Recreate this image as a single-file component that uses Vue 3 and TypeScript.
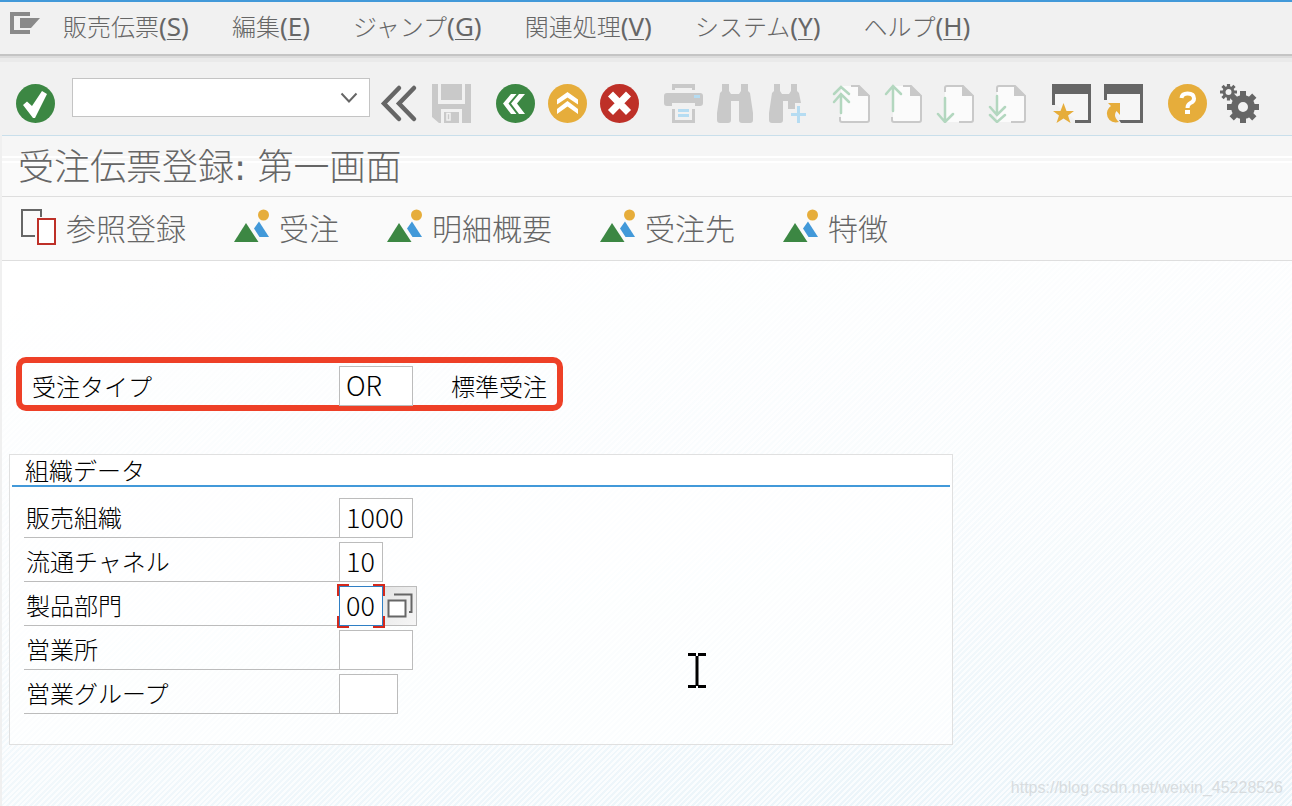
<script setup lang="ts">
import { ref } from 'vue'

interface MenuEntry { label: string; key: string }
interface Tool { id: string; name: string; off?: boolean }
interface Field { id: string; label: string; value: string; size: string; focus?: boolean }

const menus: MenuEntry[] = [
  { label: '販売伝票', key: 'S' },
  { label: '編集', key: 'E' },
  { label: 'ジャンプ', key: 'G' },
  { label: '関連処理', key: 'V' },
  { label: 'システム', key: 'Y' },
  { label: 'ヘルプ', key: 'H' },
]

const groups: Tool[][] = [
  [
    { id: 'back', name: '戻る' },
    { id: 'exit', name: '終了' },
    { id: 'cancel', name: '取消' },
  ],
  [
    { id: 'print', name: '印刷', off: true },
    { id: 'find', name: '検索', off: true },
    { id: 'findnext', name: '次を検索', off: true },
  ],
  [
    { id: 'first', name: '先頭ページ', off: true },
    { id: 'prev', name: '前ページ', off: true },
    { id: 'next', name: '次ページ', off: true },
    { id: 'last', name: '最終ページ', off: true },
  ],
  [
    { id: 'session', name: '新規セッション' },
    { id: 'shortcut', name: 'ショートカット登録' },
  ],
  [
    { id: 'help', name: 'ヘルプ' },
    { id: 'settings', name: 'レイアウト調整' },
  ],
]

const actions = ['受注', '明細概要', '受注先', '特徴']

const command = ref('')
const orderType = ref('OR')
const fields = ref<Field[]>([
  { id: 'org', label: '販売組織', value: '1000', size: 'w4' },
  { id: 'channel', label: '流通チャネル', value: '10', size: 'w2' },
  { id: 'division', label: '製品部門', value: '00', size: 'w2', focus: true },
  { id: 'office', label: '営業所', value: '', size: 'w4' },
  { id: 'group', label: '営業グループ', value: '', size: 'w3' },
])

function teeth(cx: number, cy: number, count: number, r: number, w: number, len: number): string {
  let d = ''
  for (let i = 0; i < count; i++) {
    const a = (i * 2 * Math.PI) / count
    const c = Math.cos(a)
    const s = Math.sin(a)
    const pts = [[r, -w], [r + len, -w], [r + len, w], [r, w]].map(
      ([x, y]) => `${(cx + x * c - y * s).toFixed(2)} ${(cy + x * s + y * c).toFixed(2)}`,
    )
    d += `M${pts.join('L')}Z`
  }
  return d
}
const bigGear = teeth(23, 23, 8, 10, 3, 6)
const smallGear = teeth(8.5, 8, 8, 4, 1.6, 4.5)
</script>

<template>
  <div class="window">
    <nav class="menubar" aria-label="メニュー">
      <button class="sysmenu" aria-label="システムメニュー">
        <svg width="30" height="24" viewBox="0 0 30 24"><path d="M20 2H2V20H20" fill="none" stroke="#8a8a8a" stroke-width="4" /><path d="M10 6H30L21 16H10Z" fill="#8a8a8a" /></svg>
      </button>
      <button v-for="m in menus" :key="m.key" class="menu">{{ m.label }}<span class="latin">(<u>{{ m.key }}</u>)</span></button>
    </nav>

    <div class="toolbar">
      <button class="tool ok" aria-label="確定">
        <svg viewBox="0 0 39 39"><circle cx="19.5" cy="19.5" r="19.5" fill="#3c8743" /><path d="M7 21L11 17.500L16 22L26 7L31 10L19 34H17Z" fill="#fff" /></svg>
      </button>
      <div class="command">
        <input v-model="command" aria-label="コマンド" />
        <button aria-label="履歴"><svg width="18" height="12" viewBox="0 0 18 12"><path d="M1.500 1.500L9 9.500L16.500 1.500" fill="none" stroke="#666" stroke-width="2" /></svg></button>
      </div>
      <button class="tool collapse" aria-label="閉じる">
        <svg viewBox="0 0 39 39"><path d="M19 4L4 19.500L19 35M34 4L19 19.500L34 35" fill="none" stroke="#666" stroke-width="4.500" stroke-linecap="round" /></svg>
      </button>
      <button class="tool save" aria-label="保存" disabled>
        <svg viewBox="0 0 39 39"><path d="M0 0H6V20H33V0H39V39H30V25H9V39H7L0 33Z" fill="#c9c9c9" /><path d="M9 0H30V16H9ZM12 28H27V39H12Z" fill="#c9c9c9" /><path d="M15 29.500H18V36H15Z" fill="none" stroke="#f2f2f2" stroke-width="1.500" /></svg>
      </button>

      <div v-for="(g, gi) in groups" :key="gi" class="group">
        <button v-for="t in g" :key="t.id" class="tool" :aria-label="t.name" :disabled="t.off">
          <svg viewBox="0 0 39 39">
            <template v-if="t.id === 'back'">
              <circle cx="19.500" cy="19.500" r="19.500" fill="#3c8743" />
              <path d="M7 19.500L15 10H20.500L12.500 19.500L20.500 30H15ZM15 19.500L23 10H29L21 19.500L29 30H23Z" fill="#fff" />
            </template>
            <template v-else-if="t.id === 'exit'">
              <circle cx="19.500" cy="19.500" r="19.500" fill="#e6ad3b" />
              <path d="M9 15.500L19.500 8L30 15.500V20.500L19.500 13.500L9 20.500ZM9 25L19.500 17L30 25V30L19.500 22.500L9 30Z" fill="#fff" />
            </template>
            <template v-else-if="t.id === 'cancel'">
              <circle cx="19.500" cy="19.500" r="19.500" fill="#be3028" />
              <path d="M10.500 10L28.500 28.500M28.500 10L10.500 28.500" stroke="#fff" stroke-width="7" />
            </template>
            <template v-else-if="t.id === 'print'">
              <path d="M8 6V0H31V6H28V4H11V6ZM0 12Q0 9 3 9H36Q39 9 39 12V19Q39 22 36 22H31V19H8V22H3Q0 22 0 19ZM8 25H11V36H28V25H31V39H8Z" fill="#c9c9c9" />
              <path d="M30 11H36V14H30ZM14 25H25V28H14ZM14 30H25V33H14Z" fill="#b5dcf2" />
            </template>
            <template v-else-if="t.id === 'find'">
              <path d="M6 0H13V7L15 10H23L25 7V0H32V7L34 9L37 29V36Q37 39 34 39H26Q23 39 23 36V17H15V36Q15 39 12 39H4Q1 39 1 36V29L4 9L6 7Z" fill="#c9c9c9" />
            </template>
            <template v-else-if="t.id === 'findnext'">
              <path d="M6 0H12V7L14 10H21L23 7V0H29V7L31 9L33 19H27V25H20V17H15V36Q15 39 12 39H4Q1 39 1 36V29L4 9L6 7Z" fill="#c9c9c9" />
              <path d="M29 22H32V29H38V32H32V39H29V32H23V29H29Z" fill="#b5dcf2" />
            </template>
            <template v-else-if="['first', 'prev', 'next', 'last'].includes(t.id)">
              <path d="M9 2H28L37 11V38H9Z" fill="#fbfbfb" />
              <path v-if="t.id === 'first' || t.id === 'prev'" d="M19 2H27L37 12V36Q37 38 35 38H10Q8 38 8 36V33" fill="none" stroke="#c9c9c9" stroke-width="2" />
              <path v-else d="M9 8V4Q9 2 11 2H27L37 12V36Q37 38 35 38H23" fill="none" stroke="#c9c9c9" stroke-width="2" />
              <path d="M26 1L38 12H26Z" fill="#c9c9c9" />
              <path v-if="t.id === 'first'" d="M9 29V10M2 18L9 10L17 18M2 10L9 3L17 10" class="arrow" />
              <path v-if="t.id === 'prev'" d="M9 27V3M2 10L9 2L17 10" class="arrow" />
              <path v-if="t.id === 'next'" d="M9 14V37M2 30L9 38L17 30" class="arrow" />
              <path v-if="t.id === 'last'" d="M9 12V30M2 23L9 31L17 23M2 31L9 38L17 31" class="arrow" />
            </template>
            <template v-else-if="t.id === 'session'">
              <path d="M3 10H36V36H23L3 20Z" fill="#f6f6f6" />
              <path d="M0 0H39V39H23V36H36V10H3V21H0Z" fill="#666" />
              <path d="M11.500 19L14.500 27H22L16 31.500L18.500 39L11.500 34.500L4.500 39L7 31.500L1 27H8.500Z" fill="#e6ad3b" />
            </template>
            <template v-else-if="t.id === 'shortcut'">
              <path d="M3 10H36V36H17L3 16Z" fill="#f6f6f6" />
              <path d="M0 0H39V39H17L15 36H36V10H3V16H0Z" fill="#666" />
              <path d="M4 19H16V31L12.500 27Q8.500 32 15 38Q9 39.500 5.500 36Q2.500 32.500 3 28.500Q3.500 24.500 7 22Z" fill="#e6ad3b" />
            </template>
            <template v-else-if="t.id === 'help'">
              <circle cx="19.500" cy="19.500" r="19.500" fill="#e6ad3b" />
              <path d="M13.500 14Q14 9.500 19.500 9.500Q26 9.500 26 14.500Q26 17.500 22.500 19Q19.500 20.500 19.500 24" fill="none" stroke="#fff" stroke-width="4" /><path d="M17 26H22V30H17Z" fill="#fff" />
            </template>
            <template v-else>
              <circle cx="23" cy="23" r="8.500" fill="none" stroke="#666" stroke-width="7" />
              <path :d="bigGear" fill="#666" />
              <circle cx="8.500" cy="8" r="4.500" fill="none" stroke="#666" stroke-width="3" />
              <path :d="smallGear" fill="#666" />
            </template>
          </svg>
        </button>
      </div>
    </div>

    <div class="body">
      <header class="titlebar"><h1>受注伝票登録<span class="colon">: </span>第一画面</h1></header>

      <div class="actions">
        <button class="action">
          <svg width="36" height="36" viewBox="0 0 36 36"><path d="M14 27H1V1H20V8" fill="none" stroke="#666" stroke-width="2" /><path d="M17 10H34V35H17Z" fill="#fff" stroke="#be3028" stroke-width="2" /></svg>
          参照登録
        </button>
        <button v-for="a in actions" :key="a" class="action">
          <svg width="36" height="36" viewBox="0 0 36 36"><circle cx="29.500" cy="6" r="5.500" fill="#e6ad3b" /><path d="M25 12.500L35 28H25.500L20 19.500Z" fill="#4299d9" /><path d="M12 14L24.500 33H0Z" fill="#3c8743" /></svg>
          {{ a }}
        </button>
      </div>

      <main class="content">
        <section class="order">
          <label for="order-type">受注タイプ</label>
          <input id="order-type" v-model="orderType" class="entry" />
          <span class="desc">標準受注</span>
        </section>

        <section class="panel">
          <h2>組織データ</h2>
          <div class="rows">
            <div v-for="f in fields" :key="f.id" class="row">
              <label :for="f.id">{{ f.label }}</label>
              <div class="cell" :class="{ focus: f.focus }">
                <input :id="f.id" v-model="f.value" class="entry" :class="f.size" />
                <svg v-if="f.focus" class="corners" width="48" height="44" viewBox="0 0 48 44"><path d="M1 12V1H12M36 1H47V12M47 32V43H36M12 43H1V32" fill="none" stroke="#d4291c" stroke-width="2" /></svg>
              </div>
              <button v-if="f.focus" class="pick" aria-label="入力候補">
                <svg width="26" height="26" viewBox="0 0 26 26"><path d="M7 1.500H24.500V19H22" fill="none" stroke="#666" stroke-width="2" /><path d="M1.500 7.500H18.500V23.500H1.500Z" fill="#fff" stroke="#666" stroke-width="2" /></svg>
              </button>
            </div>
          </div>
          <svg class="caret" width="20" height="36" viewBox="0 0 20 36"><path d="M1 1.500H9M11 1.500H19M1 33.500H9M11 33.500H19M10 3V33" fill="none" stroke="#000" stroke-width="3" /></svg>
        </section>
        <p class="mark">https://blog.csdn.net/weixin_45228526</p>
      </main>
    </div>
  </div>
</template>

<style>
body { margin: 0; }
</style>

<style scoped>
* { box-sizing: border-box; }
.window {
  min-height: 100vh;
  display: flex;
  flex-direction: column;
  background: #f0f0f0;
  color: #666;
  font-family: "Noto Sans CJK JP", sans-serif;
  font-weight: 300;
}
button {
  border: 0;
  padding: 0;
  background: none;
  color: inherit;
  font: inherit;
  white-space: nowrap;
}
svg { display: block; flex: none; }
h1, h2, p { margin: 0; font-weight: 300; }
.menubar {
  display: flex;
  align-items: center;
  gap: 43px;
  height: 62px;
  padding: 0 10px 12px;
  border-top: 2px solid #4299d9;
  background: linear-gradient(#f1f1f1 52px, #c4c4c4 52px 54px, #dcdcdc 54px 56px, #eaeaea 56px);
}
.sysmenu { margin: 0 -20px 4px 0; }
.menu { font-size: 24px; line-height: 36px; }
.latin { font-family: "Noto Sans", sans-serif; font-size: 26px; font-weight: 400; }
.latin u { text-decoration-thickness: 1px; text-underline-offset: 3px; }
.toolbar {
  display: flex;
  align-items: center;
  height: 73px;
  padding: 10px 16px 0;
  background: #f1f1f1;
}
.tool { width: 39px; height: 39px; flex: none; }
.tool svg { width: 39px; height: 39px; }
.command {
  position: relative;
  width: 298px;
  height: 39px;
  margin: 0 10px 12px 17px;
}
.command input {
  width: 100%;
  height: 100%;
  border: 1px solid #c4c4c4;
  padding: 0 36px 0 8px;
  background: #fff;
  font: inherit;
  font-size: 24px;
}
.command button { position: absolute; right: 12px; top: 14px; }
.save { margin-left: 13px; }
.group { display: flex; gap: 13px; margin-left: 25px; }
.arrow { fill: none; stroke: #b3d7bf; stroke-width: 2.5; stroke-linecap: round; }
.body {
  flex: 1;
  display: flex;
  flex-direction: column;
  margin-left: 2px;
  border-top: 1px solid #c9dfeb;
}
.titlebar {
  height: 61px;
  padding: 0 16px;
  background: linear-gradient(#f6f6f6 20px, #fff 20px 22px, #f6f6f6 22px 25px, #fff 25px 27px, #fafafa 27px);
  border-bottom: 1px solid #dedede;
}
h1 { font-size: 36px; line-height: 56px; }
.colon { font-family: "DejaVu Sans", sans-serif; font-weight: 400; }
.actions {
  display: flex;
  align-items: center;
  gap: 48px;
  height: 64px;
  padding: 0 19px;
  background: #fafafa;
  border-bottom: 1px solid #dedede;
}
.action { display: flex; align-items: center; gap: 9px; height: 44px; font-size: 30px; line-height: 40px; padding-bottom: 3px; }
.content {
  flex: 1;
  position: relative;
  padding: 96px 7px 61px;
  color: #000;
  font-size: 24px;
  line-height: 36px;
  background:
    linear-gradient(172deg, #fff 5%, #ffffffb0 50%, #ffffff10 100%),
    repeating-linear-gradient(135deg, #e8f3f9 0 2px, #f9fcfe 2px 4px);
}
.order {
  display: flex;
  align-items: center;
  width: 547px;
  height: 54px;
  margin-left: 7px;
  border: 6px solid #ee4027;
  border-radius: 10px;
  padding: 3px 0 0 9px;
}
.order label { width: 308px; padding-left: 1px; }
.desc { margin-left: 38px; white-space: nowrap; }
.entry {
  display: block;
  width: 74px;
  height: 40px;
  border: 1px solid #bcbcbc;
  border-radius: 0;
  padding: 0 0 3px 6px;
  background: #fff;
  color: #000;
  font: inherit;
  font-size: 27px;
  line-height: 35px;
}
.w2 { width: 44px; }
.w3 { width: 59px; }
.panel {
  position: relative;
  max-width: 944px;
  margin-top: 43px;
  border: 1px solid #e0e0e0;
  padding: 0 2px 30px;
  background: #ffffffb0;
}
h2 {
  height: 32px;
  padding-left: 13px;
  border-bottom: 2px solid #4299d9;
  font-size: 24px;
  line-height: 30px;
  background: #fff;
}
.rows { display: grid; gap: 4px; padding: 11px 12px 0; }
.row { display: flex; }
.row label { width: 315px; height: 40px; padding-left: 2px; line-height: 38px; border-bottom: 1px solid #bcbcbc; }
.cell { position: relative; }
.focus .entry { border-color: #2f7fc4; outline: 0; }
.corners { position: absolute; left: -2px; top: -2px; pointer-events: none; }
.pick {
  display: flex;
  align-items: center;
  justify-content: center;
  width: 34px;
  border: 1px solid #bcbcbc;
  border-left: 0;
  background: linear-gradient(135deg, #e4e4e4, #f6f6f6);
}
.caret { position: absolute; left: 677px; top: 198px; }
.mark {
  position: absolute;
  right: 9px;
  bottom: 8px;
  color: #d8dcdf;
  font-family: "Liberation Sans", sans-serif;
  font-size: 16px;
  line-height: 20px;
  font-weight: 400;
}
</style>
